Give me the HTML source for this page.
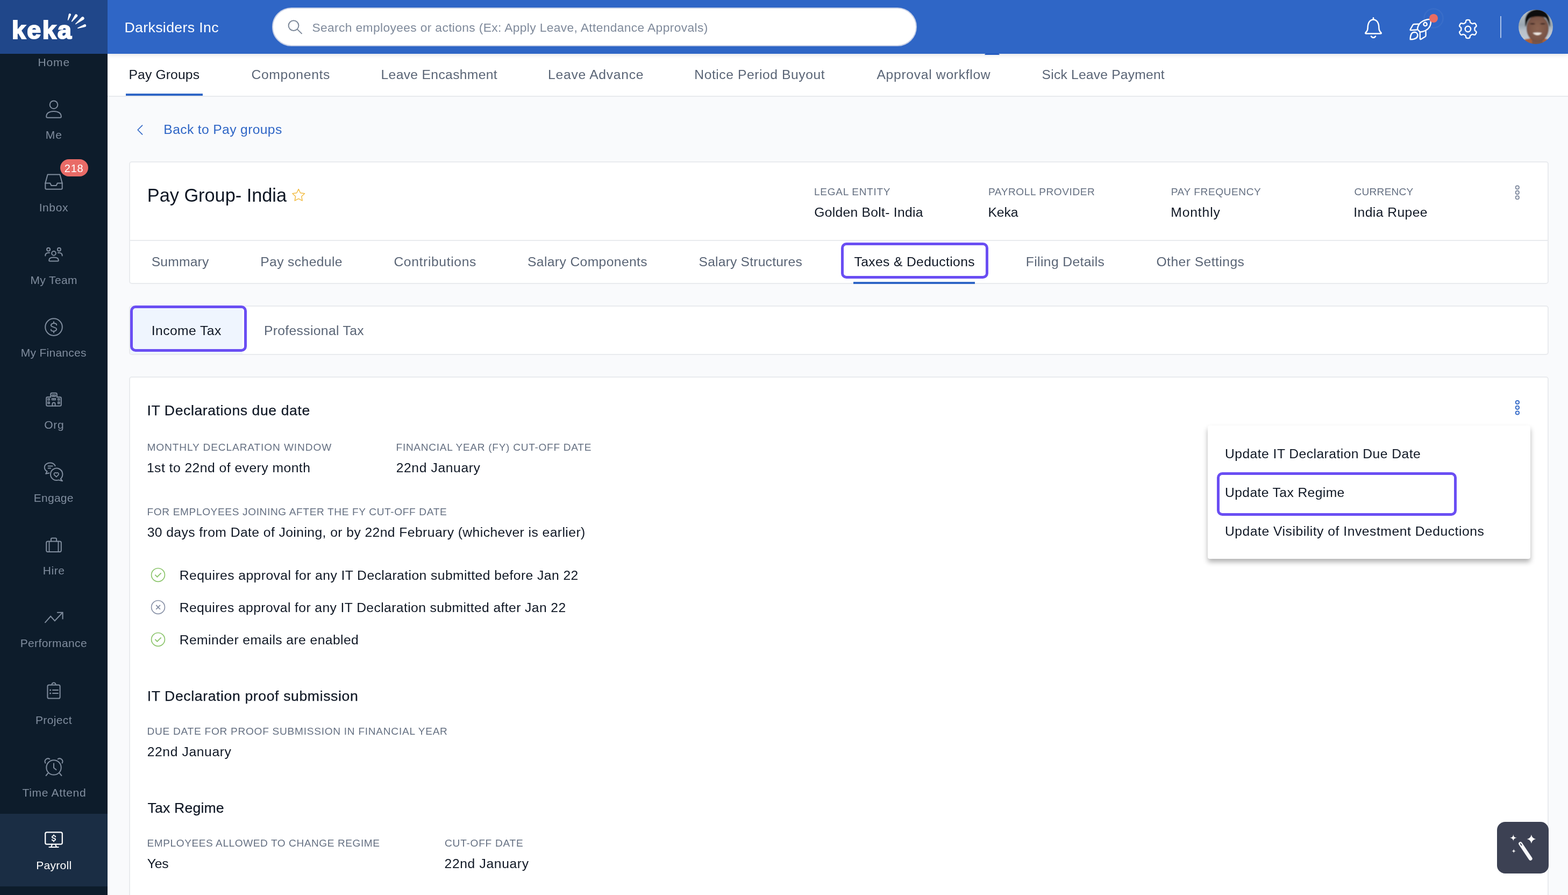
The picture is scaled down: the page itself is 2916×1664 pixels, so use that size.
<!DOCTYPE html>
<html lang="en">
<head>
<meta charset="utf-8">
<title>Keka - Pay Group- India - Taxes &amp; Deductions</title>
<style>
*{box-sizing:border-box}
html,body{margin:0;padding:0}
body{width:2916px;height:1664px;overflow:hidden;position:relative;background:#f9fafc;font-family:"Liberation Sans",sans-serif;-webkit-font-smoothing:antialiased}
.abs{position:absolute}
.t{position:absolute;display:block;margin:0;padding:0;white-space:pre;line-height:60px;height:60px;font-weight:400;text-decoration:none;cursor:default}
#txt{position:absolute;left:0;top:0;width:2916px;height:1664px;will-change:transform}
.sidebar{left:0;top:0;width:200px;height:1664px;background:#0d1c2b}
.logo{left:0;top:0;width:200px;height:100px;background:#20478a}
.active{left:0;top:1513px;width:200px;height:135px;background:#1a2d44}
.topbar{left:200px;top:0;width:2716px;height:100px;background:#2f66c6;box-shadow:0 2px 8px rgba(20,30,60,.13)}
.search{left:506px;top:14px;width:1199px;height:72px;border-radius:36px;background:#fff;border:2px solid #c6cfe6}
.subnav{left:200px;top:100px;width:2716px;height:80px;background:#fff;border-bottom:2px solid #e8eaed}
.uline{background:#2f66c6;height:4px}
.card{background:#fff;border:2px solid #e9ebee;border-radius:5px}
.hl{border:5px solid #6a4ef3;border-radius:10px}
.badge{left:112px;top:296px;width:52px;height:32px;border-radius:16px;background:#e96b67}
.menu{left:2246px;top:791px;width:600px;height:248px;background:#fff;border-radius:4px;box-shadow:0 6px 10px rgba(0,0,0,.3)}
.fab{left:2784px;top:1528px;width:96px;height:96px;border-radius:15px;background:#3c4153}
.kekalogo{height:70px;line-height:70px;font-weight:700;font-size:46.5px;color:#fff;letter-spacing:2.5px;-webkit-text-stroke:2.2px #fff;paint-order:stroke fill}
svg.ov{position:absolute;left:0;top:0;width:2916px;height:1664px;pointer-events:none}
</style>
</head>
<body>
<!-- page cards -->
<div class="abs card" style="left:240px;top:300px;width:2640px;height:228px"></div>
<div class="abs" style="left:242px;top:446px;width:2636px;height:2px;background:#e9ebee"></div>
<div class="abs uline" style="left:1587px;top:524px;width:226px"></div>
<div class="abs hl" style="left:1564px;top:451px;width:274px;height:67px"></div>

<div class="abs card" style="left:240px;top:568px;width:2640px;height:92px"></div>
<div class="abs" style="left:242px;top:570px;width:209px;height:88px;background:#eff5fe;border-radius:2px 0 0 2px"></div>
<div class="abs hl" style="left:242px;top:568px;width:217px;height:86px"></div>

<div class="abs card" style="left:240px;top:700px;width:2640px;height:1000px"></div>

<div class="abs menu"></div>
<div class="abs hl" style="left:2263px;top:878px;width:446px;height:81px"></div>

<div class="abs fab"></div>

<!-- sub navigation -->
<div class="abs subnav"></div>
<div class="abs uline" style="left:234px;top:174px;width:143px"></div>

<!-- top bar -->
<div class="abs topbar"></div>
<div class="abs search"></div>

<!-- sidebar -->
<div class="abs sidebar"></div>
<div class="abs logo"></div>
<div class="abs active"></div>
<div class="abs badge"></div>

<svg class="ov" viewBox="0 0 2916 1664">
<g fill="#fff"><path d="M127.09 37.47 L131.96 28.00 A2.2 2.2 0 0 0 127.80 26.56 L125.77 37.01 A0.7 0.7 0 0 0 127.09 37.47 Z"/><path d="M134.22 40.24 L143.74 30.68 A2.7 2.7 0 0 0 139.42 27.44 L132.94 39.28 A0.8 0.8 0 0 0 134.22 40.24 Z"/><path d="M141.32 45.12 L155.54 36.52 A3.0 3.0 0 0 0 151.78 31.84 L140.32 43.88 A0.8 0.8 0 0 0 141.32 45.12 Z"/><path d="M145.12 52.89 L158.66 49.98 A2.5 2.5 0 0 0 157.02 45.26 L144.59 51.38 A0.8 0.8 0 0 0 145.12 52.89 Z"/></g>
<g fill="none" stroke="#808d9e" stroke-width="2" stroke-linecap="round" stroke-linejoin="round">
<circle cx="100" cy="194.7" r="7.3"/>
<path d="M86.2 216.8 C86.2 210.4 92 206.9 100 206.9 S113.8 210.4 113.8 216.8 Q113.8 218.8 111.8 218.8 H88.2 Q86.2 218.8 86.2 216.8 Z"/>
<path d="M88.6 324.5 H111.4 L115.7 340.5 V349.8 Q115.7 351.8 113.7 351.8 H86.3 Q84.3 351.8 84.3 349.8 V340.5 Z"/>
<path d="M84.3 340.5 H93.2 L95.4 345 H104.6 L106.8 340.5 H115.7"/>
<circle cx="90.1" cy="463.8" r="3"/><circle cx="109.9" cy="463.8" r="3"/><circle cx="100" cy="470.9" r="3.8"/>
<path d="M91.2 484 C91.2 480.2 95 478.6 100 478.6 S108.8 480.2 108.8 484 Q108.8 485.5 107.3 485.5 H92.7 Q91.2 485.5 91.2 484 Z"/>
<path d="M84.3 475.4 C84.3 471.6 86.6 469.9 90 469.9 H92"/><path d="M115.7 475.4 C115.7 471.6 113.4 469.9 110 469.9 H108"/>
<circle cx="100" cy="608.1" r="15.8"/>
</g>
<path d="M105.20 604.14 C105.20 601.36 102.86 601.06 100.00 601.06 C96.78 601.06 94.80 603.26 94.80 604.87 C94.80 608.77 105.20 608.03 105.20 611.93 C105.20 613.54 103.22 615.74 100.00 615.74 C97.14 615.74 94.80 615.44 94.80 612.66 M100.00 598.20 V601.06 M100.00 615.74 V618.60" fill="none" stroke="#808d9e" stroke-width="2" stroke-linecap="round"/>
<g fill="none" stroke="#808d9e" stroke-width="2" stroke-linecap="round" stroke-linejoin="round">
<path d="M94.2 738.2 V733 Q94.2 730.8 96.4 730.8 H103.6 Q105.8 730.8 105.8 733 V738.2"/>
<path d="M94.2 738.2 H88.4 Q86.2 738.2 86.2 740.4 V752.6 Q86.2 754.8 88.4 754.8 H111.6 Q113.8 754.8 113.8 752.6 V740.4 Q113.8 738.2 111.6 738.2 H105.8"/>
<path d="M97.4 754.8 V751 Q97.4 748.4 100 748.4 Q102.6 748.4 102.6 751 V754.8"/>
<g stroke-width="1.6"><rect x="96.6" y="734.3" width="6.8" height="2.6"/><path d="M100 734.3 V736.9"/><rect x="96.6" y="740.7" width="6.8" height="2.8"/><path d="M100 740.7 V743.5"/><rect x="89.2" y="741" width="3" height="3"/><rect x="89.2" y="747.4" width="3" height="3"/><rect x="107.8" y="741" width="3" height="3"/><rect x="107.8" y="747.4" width="3" height="3"/></g>
<path d="M102.6 866.2 A10.2 8.6 0 1 0 87.6 876.4 L85.2 880.8 L91.4 879.4"/>
<path d="M89.6 866.6 H97.6 M89.6 870.6 H94"/>
<path d="M112.6 890.2 A11.2 11.2 0 1 0 108.8 892.4 L116 894.2 Z"/>
<path d="M104.8 886.6 L100.6 882.4 A2.6 2.6 0 0 1 104.8 879.6 A2.6 2.6 0 0 1 109 882.4 Z" stroke-width="1.8"/>
<rect x="86.2" y="1006.5" width="27.6" height="19.4" rx="2.6"/>
<path d="M94.9 1006.5 V1002.6 Q94.9 1000.5 97 1000.5 H103 Q105.1 1000.5 105.1 1002.6 V1006.5"/>
<path d="M91.5 1006.5 V1025.9 M108.5 1006.5 V1025.9" stroke-width="1.9"/>
<path d="M84 1157.3 L94.2 1145.8 L101.9 1154.3 L115.6 1139.6" stroke-linejoin="miter"/>
<path d="M106.8 1138.7 H116.6 V1150.6" stroke-linejoin="miter"/>
<path d="M94.4 1273.4 H91 Q88.4 1273.4 88.4 1276 V1295.9 Q88.4 1298.5 91 1298.5 H109 Q111.6 1298.5 111.6 1295.9 V1276 Q111.6 1273.4 109 1273.4 H105.6"/>
<path d="M96.7 1273.4 A3.4 3.4 0 1 1 103.3 1273.4 M94.6 1273.6 H105.4"/>
<path d="M98 1283.1 H108 M98 1289 H108"/>
<circle cx="93.6" cy="1283.1" r="0.9" fill="#808d9e" stroke-width="1.2"/><circle cx="93.6" cy="1289" r="0.9" fill="#808d9e" stroke-width="1.2"/>
<circle cx="100" cy="1426.9" r="13.7"/>
<path d="M100 1419.4 V1427.4 L104.6 1431.2"/>
<path d="M84.3 1418.6 A5.6 5.6 0 0 1 92.4 1411.3"/><path d="M115.7 1418.6 A5.6 5.6 0 0 0 107.6 1411.3"/>
<path d="M89.4 1437.4 L85.6 1442 M110.6 1437.4 L114.4 1442"/>
</g>
<g fill="none" stroke="#ffffff" stroke-width="2.2" stroke-linecap="round" stroke-linejoin="round">
<rect x="84.2" y="1547.3" width="31.6" height="22.4" rx="3"/>
<path d="M97 1569.7 L95.2 1574.8 M103 1569.7 L104.8 1574.8 M91.4 1575 H108.6"/>
</g>
<path d="M103.20 1555.77 C103.20 1554.16 101.76 1553.86 100.00 1553.86 C98.02 1553.86 96.80 1555.22 96.80 1556.22 C96.80 1558.63 103.20 1558.17 103.20 1560.58 C103.20 1561.58 101.98 1562.94 100.00 1562.94 C98.24 1562.94 96.80 1562.64 96.80 1561.03 M100.00 1552.10 V1553.86 M100.00 1562.94 V1564.70" fill="none" stroke="#ffffff" stroke-width="1.8" stroke-linecap="round"/>
<g fill="none" stroke="#7c8899" stroke-width="2" stroke-linecap="round"><circle cx="546" cy="47.6" r="9.4"/><path d="M553 54.6 L561 62.4"/></g>
<g fill="none" stroke="#ffffff" stroke-width="2.5" stroke-linecap="round" stroke-linejoin="round">
<path d="M2554 33.2 V35.6"/>
<path d="M2543.6 52 C2543.6 42.4 2547.6 36.4 2554 36.4 C2560.4 36.4 2564.4 42.4 2564.4 52 C2564.4 56.4 2566.4 59 2568.4 60.8 Q2569.4 62.6 2567.4 62.6 H2540.6 Q2538.6 62.6 2539.6 60.8 C2541.6 59 2543.6 56.4 2543.6 52 Z"/>
<path d="M2550 67.6 Q2554 72.6 2558 67.6"/>
<g stroke-width="2.4"><path d="M2636 54.6 C2636.4 46 2643 36.4 2660.3 35.8 C2662.6 46 2658.6 57 2641 59.6 Z"/><circle cx="2650.6" cy="45" r="3.2"/><path d="M2638.4 44.7 L2629.8 45 Q2628.2 45.1 2627.4 46.5 L2622.9 54.5 Q2622 56.2 2623.9 56.1 L2634.4 55.5"/><path d="M2640.7 60.6 L2640.9 71.9 Q2640.9 73.8 2642.5 72.9 L2650.2 68.2 Q2651.6 67.3 2651.6 65.7 L2651.5 58.2"/><path d="M2622.7 73.3 C2622.7 66 2624.6 60 2630.5 59.8 C2634 59.8 2636.4 62.4 2636.4 65.6 C2636.2 71.4 2630 73.3 2622.7 73.3 Z"/></g>
<path d="M2742.50 54.00 L2742.50 54.33 L2742.49 54.66 L2742.48 54.99 L2742.47 55.32 L2742.48 55.66 L2742.52 56.00 L2742.64 56.36 L2742.93 56.77 L2743.46 57.25 L2744.20 57.83 L2744.91 58.45 L2745.38 59.03 L2745.59 59.55 L2745.61 60.03 L2745.53 60.47 L2745.39 60.90 L2745.23 61.31 L2745.04 61.71 L2744.84 62.11 L2744.62 62.50 L2744.39 62.88 L2744.15 63.26 L2743.89 63.62 L2743.62 63.97 L2743.32 64.30 L2742.98 64.59 L2742.55 64.81 L2742.00 64.89 L2741.26 64.78 L2740.37 64.47 L2739.50 64.11 L2738.81 63.90 L2738.32 63.85 L2737.94 63.93 L2737.62 64.06 L2737.33 64.23 L2737.05 64.40 L2736.77 64.57 L2736.48 64.74 L2736.20 64.91 L2735.91 65.07 L2735.62 65.23 L2735.33 65.39 L2735.04 65.55 L2734.75 65.72 L2734.48 65.93 L2734.23 66.22 L2734.02 66.67 L2733.86 67.37 L2733.73 68.30 L2733.56 69.23 L2733.29 69.93 L2732.93 70.36 L2732.53 70.62 L2732.11 70.77 L2731.67 70.87 L2731.23 70.93 L2730.79 70.97 L2730.34 70.99 L2729.90 71.00 L2729.46 70.99 L2729.01 70.97 L2728.57 70.93 L2728.13 70.87 L2727.69 70.77 L2727.27 70.62 L2726.87 70.36 L2726.51 69.93 L2726.24 69.23 L2726.07 68.30 L2725.94 67.37 L2725.78 66.67 L2725.57 66.22 L2725.32 65.93 L2725.05 65.72 L2724.76 65.55 L2724.47 65.39 L2724.18 65.23 L2723.89 65.07 L2723.60 64.91 L2723.32 64.74 L2723.03 64.57 L2722.75 64.40 L2722.47 64.23 L2722.18 64.06 L2721.86 63.93 L2721.48 63.85 L2720.99 63.90 L2720.30 64.11 L2719.43 64.47 L2718.54 64.78 L2717.80 64.89 L2717.25 64.81 L2716.82 64.59 L2716.48 64.30 L2716.18 63.97 L2715.91 63.62 L2715.65 63.26 L2715.41 62.88 L2715.18 62.50 L2714.96 62.11 L2714.76 61.71 L2714.57 61.31 L2714.41 60.90 L2714.27 60.47 L2714.19 60.03 L2714.21 59.55 L2714.42 59.03 L2714.89 58.45 L2715.60 57.83 L2716.34 57.25 L2716.87 56.77 L2717.16 56.36 L2717.28 56.00 L2717.32 55.66 L2717.33 55.32 L2717.32 54.99 L2717.31 54.66 L2717.30 54.33 L2717.30 54.00 L2717.30 53.67 L2717.31 53.34 L2717.32 53.01 L2717.33 52.68 L2717.32 52.34 L2717.28 52.00 L2717.16 51.64 L2716.87 51.23 L2716.34 50.75 L2715.60 50.17 L2714.89 49.55 L2714.42 48.97 L2714.21 48.45 L2714.19 47.97 L2714.27 47.53 L2714.41 47.10 L2714.57 46.69 L2714.76 46.29 L2714.96 45.89 L2715.18 45.50 L2715.41 45.12 L2715.65 44.74 L2715.91 44.38 L2716.18 44.03 L2716.48 43.70 L2716.82 43.41 L2717.25 43.19 L2717.80 43.11 L2718.54 43.22 L2719.43 43.53 L2720.30 43.89 L2720.99 44.10 L2721.48 44.15 L2721.86 44.07 L2722.18 43.94 L2722.47 43.77 L2722.75 43.60 L2723.03 43.43 L2723.32 43.26 L2723.60 43.09 L2723.89 42.93 L2724.18 42.77 L2724.47 42.61 L2724.76 42.45 L2725.05 42.28 L2725.32 42.07 L2725.57 41.78 L2725.78 41.33 L2725.94 40.63 L2726.07 39.70 L2726.24 38.77 L2726.51 38.07 L2726.87 37.64 L2727.27 37.38 L2727.69 37.23 L2728.13 37.13 L2728.57 37.07 L2729.01 37.03 L2729.46 37.01 L2729.90 37.00 L2730.34 37.01 L2730.79 37.03 L2731.23 37.07 L2731.67 37.13 L2732.11 37.23 L2732.53 37.38 L2732.93 37.64 L2733.29 38.07 L2733.56 38.77 L2733.73 39.70 L2733.86 40.63 L2734.02 41.33 L2734.23 41.78 L2734.48 42.07 L2734.75 42.28 L2735.04 42.45 L2735.33 42.61 L2735.62 42.77 L2735.91 42.93 L2736.20 43.09 L2736.48 43.26 L2736.77 43.43 L2737.05 43.60 L2737.33 43.77 L2737.62 43.94 L2737.94 44.07 L2738.32 44.15 L2738.81 44.10 L2739.50 43.89 L2740.37 43.53 L2741.26 43.22 L2742.00 43.11 L2742.55 43.19 L2742.98 43.41 L2743.32 43.70 L2743.62 44.03 L2743.89 44.38 L2744.15 44.74 L2744.39 45.12 L2744.62 45.50 L2744.84 45.89 L2745.04 46.29 L2745.23 46.69 L2745.39 47.10 L2745.53 47.53 L2745.61 47.97 L2745.59 48.45 L2745.38 48.97 L2744.91 49.55 L2744.20 50.17 L2743.46 50.75 L2742.93 51.23 L2742.64 51.64 L2742.52 52.00 L2742.48 52.34 L2742.47 52.68 L2742.48 53.01 L2742.49 53.34 L2742.50 53.67 Z" stroke-width="2.4"/>
<circle cx="2729.9" cy="54" r="5.2" stroke-width="2.4"/>
</g>
<circle cx="2666" cy="34" r="17.6" fill="none" stroke="rgba(255,255,255,.05)" stroke-width="2.4"/>
<circle cx="2666" cy="34" r="8" fill="#e96c62"/>
<rect x="2790" y="30" width="2" height="40.5" fill="rgba(255,255,255,.6)"/>
<path d="M1833 99.5 H1857 L1859.2 102 H1830.8 Z" fill="#2259bf"/>
<defs><clipPath id="av"><circle cx="2856" cy="49.9" r="32"/></clipPath><filter id="avb" x="-10%" y="-10%" width="120%" height="120%"><feGaussianBlur stdDeviation="1.3"/></filter><radialGradient id="face" cx="0.5" cy="0.5" r="0.62"><stop offset="0" stop-color="#8d6452"/><stop offset="0.7" stop-color="#7a5546"/><stop offset="1" stop-color="#5e4036"/></radialGradient><linearGradient id="bgav" x1="0" y1="0" x2="0" y2="1"><stop offset="0" stop-color="#c3ccd3"/><stop offset="0.45" stop-color="#9aa7b0"/><stop offset="0.6" stop-color="#b9c2cb"/><stop offset="1" stop-color="#c9ced6"/></linearGradient></defs>
<g clip-path="url(#av)"><g filter="url(#avb)"><rect x="2820" y="14" width="72" height="72" fill="url(#bgav)"/><path d="M2822 88 L2836 73 Q2858 68 2880 73 L2892 88 Z" fill="#a9603a"/><rect x="2849" y="66" width="20" height="20" fill="#7a5546"/><ellipse cx="2859.5" cy="53" rx="20.6" ry="24.6" fill="url(#face)"/><path d="M2837 50 C2834 34 2838 20 2856 17.5 C2874 16 2884 28 2882.5 50 C2880 44 2878 37 2874 33 C2866 30 2852 30 2846 33.5 C2841 37 2839.5 44 2837 50 Z" fill="#0d0e11"/><path d="M2844.5 44.2 Q2850 41.6 2855.5 44.4 Q2850 46.6 2844.5 44.2 Z M2863.5 44.4 Q2869 41.6 2874.5 44.2 Q2869 46.6 2863.5 44.4 Z" fill="#2a1a16" opacity=".85"/><path d="M2850.5 61.2 Q2859 59.6 2867.5 61.2 Q2859.5 69.4 2850.5 61.2 Z" fill="#f5eee8"/></g></g>
<path d="M264.6 233.2 L256.2 241.5 L264.6 249.8" fill="none" stroke="#2f66c6" stroke-width="1.7" stroke-linecap="round" stroke-linejoin="round"/>
<path d="M555.20 351.60 L558.67 358.73 L566.52 359.82 L560.81 365.32 L562.19 373.13 L555.20 369.40 L548.21 373.13 L549.59 365.32 L543.88 359.82 L551.73 358.73 Z" fill="none" stroke="#f2bc45" stroke-width="1.5" stroke-linejoin="round"/>
<circle cx="2821.8" cy="348.5" r="3.2" fill="none" stroke="#7b869b" stroke-width="1.7"/>
<circle cx="2821.8" cy="357.9" r="3.2" fill="none" stroke="#7b869b" stroke-width="1.7"/>
<circle cx="2821.8" cy="367.3" r="3.2" fill="none" stroke="#7b869b" stroke-width="1.7"/>
<circle cx="2821.9" cy="748.0" r="3.2" fill="none" stroke="#2f66c6" stroke-width="1.8"/>
<circle cx="2821.9" cy="757.8" r="3.2" fill="none" stroke="#2f66c6" stroke-width="1.8"/>
<circle cx="2821.9" cy="767.5" r="3.2" fill="none" stroke="#2f66c6" stroke-width="1.8"/>
<circle cx="294" cy="1068.9" r="12.4" fill="none" stroke="#8cc56c" stroke-width="1.7"/>
<path d="M288.4 1068.6 L292.3 1072.6 L299.6 1065.4" fill="none" stroke="#8cc56c" stroke-width="1.9" stroke-linecap="butt" stroke-linejoin="miter"/>
<circle cx="294" cy="1128.9" r="12.4" fill="none" stroke="#8a93a8" stroke-width="1.7"/>
<path d="M290.70000000000005 1125.5 L297.5 1132.3000000000002 M297.5 1125.5 L290.70000000000005 1132.3000000000002" fill="none" stroke="#8a93a8" stroke-width="1.8" stroke-linecap="round"/>
<circle cx="294" cy="1188.9" r="12.4" fill="none" stroke="#8cc56c" stroke-width="1.7"/>
<path d="M288.4 1188.6 L292.3 1192.6 L299.6 1185.4" fill="none" stroke="#8cc56c" stroke-width="1.9" stroke-linecap="butt" stroke-linejoin="miter"/>
<path d="M2827.6 1568.6 L2846.2 1596.4" stroke="#f7f8fa" stroke-width="6.8" stroke-linecap="round" fill="none"/>
<path d="M2827.6 1568.4 L2829.6 1571.4" stroke="#3c4153" stroke-width="1.8" stroke-linecap="round" fill="none"/>
<path d="M2814.30 1551.20 Q2814.58 1557.52 2820.90 1557.80 Q2814.58 1558.08 2814.30 1564.40 Q2814.02 1558.08 2807.70 1557.80 Q2814.02 1557.52 2814.30 1551.20 Z" fill="#fff"/>
<path d="M2847.90 1551.80 Q2849.11 1558.79 2856.10 1560.00 Q2849.11 1561.21 2847.90 1568.20 Q2846.69 1561.21 2839.70 1560.00 Q2846.69 1558.79 2847.90 1551.80 Z" fill="#fff"/>
<path d="M2815.10 1577.90 Q2815.25 1582.05 2819.40 1582.20 Q2815.25 1582.35 2815.10 1586.50 Q2814.95 1582.35 2810.80 1582.20 Q2814.95 1582.05 2815.10 1577.90 Z" fill="#fff" opacity=".9"/>
</svg>

<div id="txt">
<header aria-label="Top bar">
<div class="t" style="left:231.39px;top:21.00px;font-size:26.7px;letter-spacing:0.360px;color:#ffffff;">Darksiders Inc</div>
<div class="t" style="left:580.49px;top:21.00px;font-size:22.8px;letter-spacing:0.357px;color:#7f8a9b;">Search employees or actions (Ex: Apply Leave, Attendance Approvals)</div>
</header>
<nav aria-label="Main navigation">
<a class="t kekalogo" style="left:22px;top:20.6px">keka</a>
<a class="t" style="left:70.58px;top:86.00px;font-size:21.0px;letter-spacing:0.836px;color:#808d9e;">Home</a>
<a class="t" style="left:84.68px;top:221.00px;font-size:21.0px;letter-spacing:1.041px;color:#808d9e;">Me</a>
<a class="t" style="left:72.70px;top:356.00px;font-size:21.0px;letter-spacing:0.582px;color:#808d9e;">Inbox</a>
<a class="t" style="left:56.48px;top:491.00px;font-size:21.0px;letter-spacing:0.377px;color:#808d9e;">My Team</a>
<a class="t" style="left:38.78px;top:626.00px;font-size:21.0px;letter-spacing:0.274px;color:#808d9e;">My Finances</a>
<a class="t" style="left:82.24px;top:760.00px;font-size:21.0px;letter-spacing:0.667px;color:#808d9e;">Org</a>
<a class="t" style="left:62.78px;top:896.00px;font-size:21.0px;letter-spacing:0.260px;color:#808d9e;">Engage</a>
<a class="t" style="left:79.68px;top:1031.00px;font-size:21.0px;letter-spacing:0.599px;color:#808d9e;">Hire</a>
<a class="t" style="left:37.68px;top:1166.00px;font-size:21.0px;letter-spacing:0.374px;color:#808d9e;">Performance</a>
<a class="t" style="left:65.88px;top:1309.00px;font-size:21.0px;letter-spacing:0.387px;color:#808d9e;">Project</a>
<a class="t" style="left:41.52px;top:1444.00px;font-size:21.0px;letter-spacing:0.681px;color:#808d9e;">Time Attend</a>
<a class="t" style="left:67.18px;top:1579.00px;font-size:21.0px;letter-spacing:0.280px;color:#ffffff;">Payroll</a>
<div class="t" style="left:119.70px;top:283.00px;font-size:20.0px;letter-spacing:0.844px;color:#ffffff;">218</div>
</nav>
<nav aria-label="Payroll settings">
<a class="t" style="left:239.46px;top:109.00px;font-size:24.7px;letter-spacing:0.140px;color:#0f1724;">Pay Groups</a>
<a class="t" style="left:467.50px;top:109.00px;font-size:24.7px;letter-spacing:0.655px;color:#5a6576;">Components</a>
<a class="t" style="left:708.56px;top:109.00px;font-size:24.7px;letter-spacing:0.319px;color:#5a6576;">Leave Encashment</a>
<a class="t" style="left:1019.06px;top:109.00px;font-size:24.7px;letter-spacing:0.721px;color:#5a6576;">Leave Advance</a>
<a class="t" style="left:1291.26px;top:109.00px;font-size:24.7px;letter-spacing:0.553px;color:#5a6576;">Notice Period Buyout</a>
<a class="t" style="left:1630.43px;top:109.00px;font-size:24.7px;letter-spacing:0.683px;color:#5a6576;">Approval workflow</a>
<a class="t" style="left:1937.61px;top:109.00px;font-size:24.7px;letter-spacing:0.178px;color:#5a6576;">Sick Leave Payment</a>
</nav>
<section aria-label="Pay group">
<a class="t" style="left:304.36px;top:211.00px;font-size:24.7px;letter-spacing:0.343px;color:#2f66c6;">Back to Pay groups</a>
<h1 class="t" style="left:273.77px;top:333.00px;font-size:34.4px;letter-spacing:-0.048px;color:#0f1724;">Pay Group- India</h1>
<label class="t" style="left:1514.03px;top:327.00px;font-size:19.1px;letter-spacing:0.676px;color:#657082;">LEGAL ENTITY</label>
<label class="t" style="left:1837.93px;top:327.00px;font-size:19.1px;letter-spacing:0.555px;color:#657082;">PAYROLL PROVIDER</label>
<label class="t" style="left:2177.73px;top:327.00px;font-size:19.1px;letter-spacing:0.567px;color:#657082;">PAY FREQUENCY</label>
<label class="t" style="left:2518.60px;top:327.00px;font-size:19.1px;letter-spacing:0.219px;color:#657082;">CURRENCY</label>
<div class="t" style="left:1514.32px;top:365.00px;font-size:24.7px;letter-spacing:0.263px;color:#0f1724;">Golden Bolt- India</div>
<div class="t" style="left:1837.46px;top:365.00px;font-size:24.7px;letter-spacing:-0.114px;color:#0f1724;">Keka</div>
<div class="t" style="left:2177.26px;top:365.00px;font-size:24.7px;letter-spacing:0.858px;color:#0f1724;">Monthly</div>
<div class="t" style="left:2517.30px;top:365.00px;font-size:24.7px;letter-spacing:0.410px;color:#0f1724;">India Rupee</div>
<a class="t" style="left:281.71px;top:457.00px;font-size:24.7px;letter-spacing:0.156px;color:#5a6576;">Summary</a>
<a class="t" style="left:484.26px;top:457.00px;font-size:24.7px;letter-spacing:0.367px;color:#5a6576;">Pay schedule</a>
<a class="t" style="left:732.40px;top:457.00px;font-size:24.7px;letter-spacing:0.627px;color:#5a6576;">Contributions</a>
<a class="t" style="left:981.01px;top:457.00px;font-size:24.7px;letter-spacing:0.364px;color:#5a6576;">Salary Components</a>
<a class="t" style="left:1299.51px;top:457.00px;font-size:24.7px;letter-spacing:0.182px;color:#5a6576;">Salary Structures</a>
<a class="t" style="left:1588.45px;top:457.00px;font-size:24.7px;letter-spacing:0.350px;color:#0f1724;">Taxes &amp; Deductions</a>
<a class="t" style="left:1907.76px;top:457.00px;font-size:24.7px;letter-spacing:0.374px;color:#5a6576;">Filing Details</a>
<a class="t" style="left:2150.48px;top:457.00px;font-size:24.7px;letter-spacing:0.436px;color:#5a6576;">Other Settings</a>
</section>
<nav aria-label="Tax type">
<a class="t" style="left:281.70px;top:585.00px;font-size:24.7px;letter-spacing:0.431px;color:#0f1724;">Income Tax</a>
<a class="t" style="left:490.96px;top:585.00px;font-size:24.7px;letter-spacing:0.329px;color:#5a6576;">Professional Tax</a>
</nav>
<main aria-label="Income tax settings">
<h2 class="t" style="left:273.60px;top:733.00px;font-size:26.6px;letter-spacing:0.580px;color:#0f1724;-webkit-text-stroke:0.25px #0f1724;">IT Declarations due date</h2>
<label class="t" style="left:273.53px;top:802.00px;font-size:19.1px;letter-spacing:0.892px;color:#657082;">MONTHLY DECLARATION WINDOW</label>
<label class="t" style="left:736.53px;top:802.00px;font-size:19.1px;letter-spacing:0.698px;color:#657082;">FINANCIAL YEAR (FY) CUT-OFF DATE</label>
<div class="t" style="left:272.90px;top:840.00px;font-size:24.7px;letter-spacing:0.468px;color:#0f1724;">1st to 22nd of every month</div>
<div class="t" style="left:736.65px;top:840.00px;font-size:24.7px;letter-spacing:0.610px;color:#0f1724;">22nd January</div>
<label class="t" style="left:273.53px;top:922.00px;font-size:19.1px;letter-spacing:0.627px;color:#657082;">FOR EMPLOYEES JOINING AFTER THE FY CUT-OFF DATE</label>
<div class="t" style="left:273.64px;top:960.00px;font-size:24.7px;letter-spacing:0.419px;color:#0f1724;">30 days from Date of Joining, or by 22nd February (whichever is earlier)</div>
<div class="t" style="left:333.76px;top:1040.00px;font-size:24.7px;letter-spacing:0.430px;color:#0f1724;">Requires approval for any IT Declaration submitted before Jan 22</div>
<div class="t" style="left:333.76px;top:1100.00px;font-size:24.7px;letter-spacing:0.396px;color:#0f1724;">Requires approval for any IT Declaration submitted after Jan 22</div>
<div class="t" style="left:333.76px;top:1160.00px;font-size:24.7px;letter-spacing:0.408px;color:#0f1724;">Reminder emails are enabled</div>
<h2 class="t" style="left:273.70px;top:1264.00px;font-size:26.6px;letter-spacing:0.619px;color:#0f1724;-webkit-text-stroke:0.25px #0f1724;">IT Declaration proof submission</h2>
<label class="t" style="left:273.53px;top:1330.00px;font-size:19.1px;letter-spacing:0.730px;color:#657082;">DUE DATE FOR PROOF SUBMISSION IN FINANCIAL YEAR</label>
<div class="t" style="left:273.65px;top:1368.00px;font-size:24.7px;letter-spacing:0.610px;color:#0f1724;">22nd January</div>
<h2 class="t" style="left:274.59px;top:1472.00px;font-size:26.6px;letter-spacing:0.184px;color:#0f1724;-webkit-text-stroke:0.25px #0f1724;">Tax Regime</h2>
<label class="t" style="left:273.53px;top:1538.00px;font-size:19.1px;letter-spacing:0.556px;color:#657082;">EMPLOYEES ALLOWED TO CHANGE REGIME</label>
<label class="t" style="left:827.10px;top:1538.00px;font-size:19.1px;letter-spacing:0.731px;color:#657082;">CUT-OFF DATE</label>
<div class="t" style="left:273.76px;top:1576.00px;font-size:24.7px;letter-spacing:-0.271px;color:#0f1724;">Yes</div>
<div class="t" style="left:826.55px;top:1576.00px;font-size:24.7px;letter-spacing:0.628px;color:#0f1724;">22nd January</div>
</main>
<div role="menu" aria-label="Actions">
<a class="t" style="left:2278.00px;top:814.00px;font-size:24.7px;letter-spacing:0.445px;color:#0f1724;">Update IT Declaration Due Date</a>
<a class="t" style="left:2278.00px;top:886.00px;font-size:24.7px;letter-spacing:0.372px;color:#0f1724;">Update Tax Regime</a>
<a class="t" style="left:2278.00px;top:958.00px;font-size:24.7px;letter-spacing:0.517px;color:#0f1724;">Update Visibility of Investment Deductions</a>
</div>
</div>
</body>
</html>
